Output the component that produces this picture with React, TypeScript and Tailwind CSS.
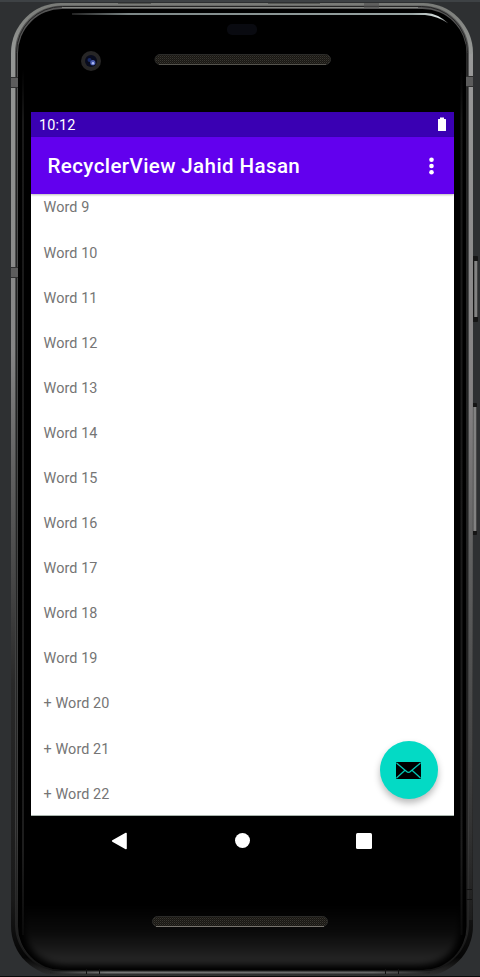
import React from 'react';

const words: string[] = [
  'Word 9', 'Word 10', 'Word 11', 'Word 12', 'Word 13', 'Word 14', 'Word 15',
  'Word 16', 'Word 17', 'Word 18', 'Word 19', '+ Word 20', '+ Word 21', '+ Word 22',
];

/** Handset shell: metal rim, glass edge, side keys, speaker grilles and camera. */
function PhoneShell() {
  return (
    <svg className="absolute inset-0" width="480" height="977" viewBox="0 0 480 977" aria-hidden="true">
      <defs>
        <linearGradient id="rim" x1="0" y1="0" x2="0" y2="977" gradientUnits="userSpaceOnUse">
          <stop offset="0" stopColor="#777975" />
          <stop offset="0.05" stopColor="#959795" />
          <stop offset="0.36" stopColor="#858585" />
          <stop offset="0.48" stopColor="#616161" />
          <stop offset="0.6" stopColor="#454545" />
          <stop offset="0.7" stopColor="#292929" />
          <stop offset="0.92" stopColor="#191919" />
          <stop offset="0.98" stopColor="#050505" />
          <stop offset="1" stopColor="#333" />
        </linearGradient>
        <linearGradient id="rimRight" x1="0" y1="50" x2="0" y2="920" gradientUnits="userSpaceOnUse">
          <stop offset="0" stopColor="#9a9a9a" />
          <stop offset="0.4" stopColor="#858283" />
          <stop offset="0.58" stopColor="#616161" />
          <stop offset="0.8" stopColor="#454545" />
          <stop offset="1" stopColor="#1d1d1d" />
        </linearGradient>
        <linearGradient id="rimInner" x1="0" y1="0" x2="0" y2="977" gradientUnits="userSpaceOnUse">
          <stop offset="0" stopColor="#555" />
          <stop offset="0.4" stopColor="#464848" />
          <stop offset="0.85" stopColor="#3c3c3c" />
          <stop offset="1" stopColor="#141414" />
        </linearGradient>
        <linearGradient id="chin" x1="0" y1="905" x2="0" y2="968" gradientUnits="userSpaceOnUse">
          <stop offset="0" stopColor="#000" />
          <stop offset="0.45" stopColor="#0b0b0b" />
          <stop offset="1" stopColor="#2c2c2c" />
        </linearGradient>
        <linearGradient id="edge" x1="0" y1="70" x2="0" y2="935" gradientUnits="userSpaceOnUse">
          <stop offset="0" stopColor="#000" />
          <stop offset="0.06" stopColor="#191919" />
          <stop offset="0.9" stopColor="#1d1d1d" />
          <stop offset="1" stopColor="#0a0a0a" />
        </linearGradient>
        <linearGradient id="shine" x1="72" y1="0" x2="450" y2="0" gradientUnits="userSpaceOnUse">
          <stop offset="0" stopColor="#222" />
          <stop offset="0.15" stopColor="#7c8686" />
          <stop offset="0.9" stopColor="#98a4a3" />
          <stop offset="0.97" stopColor="#d8e0df" />
          <stop offset="1" stopColor="#555" />
        </linearGradient>
        <linearGradient id="foot" x1="50" y1="0" x2="430" y2="0" gradientUnits="userSpaceOnUse">
          <stop offset="0" stopColor="#222" />
          <stop offset="0.15" stopColor="#777" />
          <stop offset="0.85" stopColor="#666" />
          <stop offset="1" stopColor="#222" />
        </linearGradient>
        <linearGradient id="key" x1="0" y1="0" x2="1" y2="0">
          <stop offset="0" stopColor="#555" />
          <stop offset="0.5" stopColor="#8a8a8a" />
          <stop offset="1" stopColor="#777" />
        </linearGradient>
        <pattern id="mesh" width="2" height="2" patternUnits="userSpaceOnUse">
          <rect width="2" height="2" fill="#181714" />
          <rect width="1" height="1" fill="#3a3730" />
          <rect x="1" y="1" width="1" height="1" fill="#28251f" />
        </pattern>
        <filter id="soft" x="-10%" y="-10%" width="120%" height="120%" colorInterpolationFilters="sRGB">
          <feGaussianBlur stdDeviation="3" />
        </filter>
      </defs>

      <rect width="480" height="2" fill="#3e4245" />
      <rect y="976" width="480" height="1" fill="#090909" />

      <rect x="472" y="256" width="6" height="66" rx="1" fill="#151515" />
      <rect x="474" y="261" width="3.5" height="56" fill="url(#key)" />
      <rect x="472" y="403" width="5" height="132" rx="1" fill="#151515" />
      <rect x="473" y="407" width="3.5" height="124" fill="url(#key)" />

      <rect x="11" y="3" width="462" height="973" rx="50" fill="url(#rim)" />
      <rect x="468.5" y="54" width="4" height="866" fill="url(#rimRight)" />
      <rect x="15" y="5.5" width="454" height="966" rx="47" fill="url(#rimInner)" />
      <rect x="16.5" y="6.5" width="451" height="963" rx="46" fill="none" stroke="#242424" />
      <path d="M62 7.5H418" stroke="#878985" />
      <rect x="18" y="9" width="448.5" height="961" rx="44" fill="#000" />
      <path d="M24 905V920Q24 965 68 965H416Q460 965 460 920V905Z" fill="url(#chin)" filter="url(#soft)" />
      <rect x="22" y="70" width="2" height="865" fill="url(#edge)" />
      <rect x="460.5" y="70" width="2" height="865" fill="url(#edge)" />
      <path d="M72 13H426Q438 13.5 448.5 23.5Q438 16.3 425 15H72Z" fill="url(#shine)" />
      <path d="M50 972.5H430" stroke="url(#foot)" strokeWidth="2" />
      <path d="M118 3.5H151M268 3.5H320" stroke="#555753" />
      <rect x="364" y="3" width="15" height="5" fill="#4f4f4f" opacity=".6" />

      <g fill="#5c5c5c">
        <path d="M11 77H18V88H11ZM11 267H18V278H11ZM466 76H473V87H466Z" />
      </g>
      <path d="M11 77.5H18M11 87.5H18M11 267.5H18M11 277.5H18M466 76.5H473M466 86.5H473" stroke="#303030" />
      <path d="M86.5 969V974M99.5 969V974M385.5 969V974M398.5 969V974M466 889.5H472M466 899.5H472" stroke="#111" />

      <rect x="227" y="24" width="30" height="11" rx="5" fill="#090a10" />
      <circle cx="91" cy="61" r="10" fill="#272626" />
      <circle cx="91" cy="61" r="6" fill="#080b1d" />
      <circle cx="89.5" cy="60" r="2" fill="#182a66" />
      <circle cx="92.8" cy="62.7" r="2.6" fill="#4a5cb0" />
      <circle cx="93" cy="63.2" r="1.2" fill="#aebcf8" />

      <rect x="155" y="54.5" width="175.5" height="10" rx="5" fill="url(#mesh)" stroke="#2b2b29" />
      <path d="M159 64.5H326" stroke="#55544e" />
      <rect x="152.5" y="916.5" width="175" height="10" rx="5" fill="url(#mesh)" stroke="#2b2b29" />
      <path d="M156 926.5H324" stroke="#77746e" />
    </svg>
  );
}

function StatusBar() {
  return (
    <div className="flex h-[25px] shrink-0 items-center justify-between bg-[#3a00b3] pr-2 pl-[8px] text-[14.4px] text-white">
      <span className="pt-[2px] leading-[25px] tracking-[0.1px]">10:12</span>
      <svg className="-mt-px" width="8" height="14" viewBox="0 0 8 14" fill="#fff" aria-hidden="true">
        <path d="M2 0.5H6V2H7.5Q8 2 8 2.5V13.5Q8 14 7.5 14H0.5Q0 14 0 13.5V2.5Q0 2 0.5 2H2Z" />
      </svg>
    </div>
  );
}

function AppBar() {
  return (
    <header className="z-10 flex h-[57px] shrink-0 items-center justify-between bg-[#6200ee] pr-5 pl-[16.5px] text-white shadow-[0_1px_2px_rgba(0,0,0,0.28)]">
      <h1 className="pt-px text-[20.6px] leading-6 font-medium tracking-[0.37px] whitespace-nowrap">RecyclerView Jahid Hasan</h1>
      <svg width="5" height="18" viewBox="0 0 5 18" fill="#fff" aria-hidden="true">
        <circle cx="2.5" cy="2.8" r="2.3" />
        <circle cx="2.5" cy="9" r="2.3" />
        <circle cx="2.5" cy="15.2" r="2.3" />
      </svg>
    </header>
  );
}

function MailButton() {
  return (
    <button aria-label="Mail" className="absolute right-[16px] bottom-[16px] flex size-[58px] items-center justify-center rounded-full bg-[#03dac5] pr-px shadow-[0_4px_7px_rgba(0,0,0,0.28)]">
      <svg width="25" height="17" viewBox="0 0 25 17" aria-hidden="true">
        <rect width="25" height="17" rx="1" fill="#000" />
        <path d="M0.5 1L10.3 9.3Q12.5 11.4 14.7 9.3L24.5 1M0.5 16L9 8.3M24.5 16L16 8.3" fill="none" stroke="#03c5b3" strokeWidth="1.3" />
      </svg>
    </button>
  );
}

function NavigationBar() {
  return (
    <nav className="flex h-[49px] shrink-0 items-center bg-black pl-[80px]">
      <svg width="17" height="18" viewBox="0 0 17 18" aria-hidden="true">
        <path d="M15 1.5V16.5L1.7 9Z" fill="#fff" stroke="#fff" strokeWidth="1.6" strokeLinejoin="round" />
      </svg>
      <span className="ml-[107px] size-[15px] rounded-full bg-white" />
      <span className="ml-[106px] size-[16px] rounded-[1.5px] bg-white" />
    </nav>
  );
}

export default function App() {
  return (
    <div className="relative h-[977px] w-[480px] overflow-hidden bg-[#2e3032] pt-[112px] pl-[31px] font-['Roboto',sans-serif]">
      <PhoneShell />
      <div className="relative flex w-[423px] flex-col">
        <StatusBar />
        <AppBar />
        <main className="relative h-[622px] shrink-0 overflow-hidden border-b border-[#a9b5ad] bg-white">
          <ul className="-mt-[8.3px]">
            {words.map((word) => (
              <li key={word} className="flex h-[45.1px] items-center pl-[12.5px] text-[14.4px] tracking-[0.1px] text-[#757575]">
                {word}
              </li>
            ))}
          </ul>
          <MailButton />
        </main>
        <NavigationBar />
      </div>
    </div>
  );
}
